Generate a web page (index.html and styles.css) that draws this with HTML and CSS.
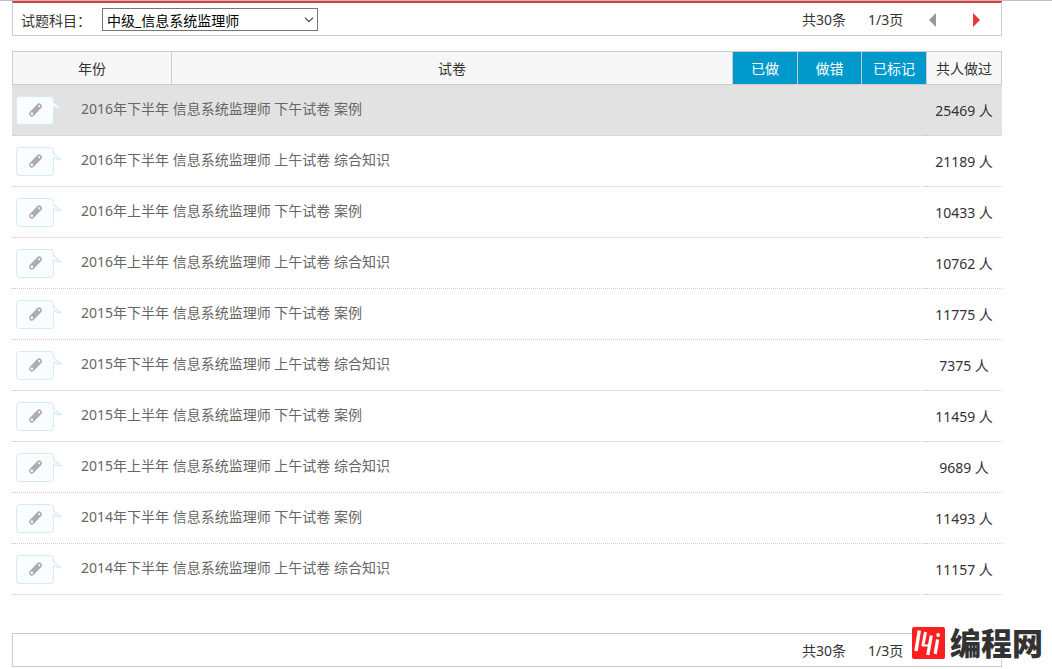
FILE: index.html
```html
<!DOCTYPE html>
<html lang="zh-CN">
<head>
<meta charset="utf-8">
<title>试题列表</title>
<link rel="stylesheet" href="styles.css">
</head>
<body>
<svg class="defs" aria-hidden="true">
  <symbol id="note" viewBox="0 0 46 30">
    <path d="M37.500 6.500L44.500 12.500H41L38 10.500" fill="#fafdff" stroke="#d8edf7" stroke-width="1.400"/>
    <rect x=".5" y=".5" width="37" height="28" rx="3" fill="#fafdff" stroke="#d5eaf5"/>
    <path d="M37.500 7.500v3" stroke="#fafdff" stroke-width="1.400"/>
    <g transform="translate(19.500 14) rotate(-46)">
      <rect x="-8" y="-2.800" width="16" height="5.600" rx="2.600" fill="#aaa"/>
      <circle cx="5.300" cy="0" r="1.200" fill="#f2f2f2"/>
      <circle cx="-5.300" cy="0" r="1.400" fill="#f8f8f8"/>
      <path d="M-3 -.9H3M-3 .9H3" stroke="#b8b8b8" stroke-width=".6"/>
    </g>
  </symbol>
</svg>
<main class="page">
  <div class="bar bar-top">
    <div class="subject">
      <label for="subject">试题科目<span class="colon">：</span></label>
      <span class="select-box">
        <select id="subject"><option>中级_信息系统监理师</option></select>
        <svg class="chevron" viewBox="0 0 10 6" aria-hidden="true"><path d="M1 .7l4 4 4-4" fill="none" stroke="#444" stroke-width="1.200"/></svg>
      </span>
    </div>
    <div class="pager">
      <span class="total">共30条</span>
      <span class="current">1/3页</span>
      <button class="turn prev" aria-label="上一页" disabled><svg viewBox="0 0 7 14"><path d="M7 0v14L0 7z"/></svg></button>
      <button class="turn next" aria-label="下一页"><svg viewBox="0 0 7 14"><path d="M0 0v14l7-7z"/></svg></button>
    </div>
  </div>

  <table class="papers">
    <colgroup><col class="c-year"><col><col class="c-tab"><col class="c-mid"><col class="c-tab"><col class="c-count"></colgroup>
    <thead>
      <tr><th>年份</th><th>试卷</th><th class="tab">已做</th><th class="tab">做错</th><th class="tab">已标记</th><th class="last">共人做过</th></tr>
    </thead>
    <tbody>
      <tr class="active"><td colspan="5"><a class="paper" href="#"><svg class="note"><use href="#note"/></svg><span>2016年下半年 信息系统监理师 下午试卷 案例</span></a></td><td class="count">25469 人</td></tr>
      <tr><td colspan="5"><a class="paper" href="#"><svg class="note"><use href="#note"/></svg><span>2016年下半年 信息系统监理师 上午试卷 综合知识</span></a></td><td class="count">21189 人</td></tr>
      <tr><td colspan="5"><a class="paper" href="#"><svg class="note"><use href="#note"/></svg><span>2016年上半年 信息系统监理师 下午试卷 案例</span></a></td><td class="count">10433 人</td></tr>
      <tr><td colspan="5"><a class="paper" href="#"><svg class="note"><use href="#note"/></svg><span>2016年上半年 信息系统监理师 上午试卷 综合知识</span></a></td><td class="count">10762 人</td></tr>
      <tr><td colspan="5"><a class="paper" href="#"><svg class="note"><use href="#note"/></svg><span>2015年下半年 信息系统监理师 下午试卷 案例</span></a></td><td class="count">11775 人</td></tr>
      <tr><td colspan="5"><a class="paper" href="#"><svg class="note"><use href="#note"/></svg><span>2015年下半年 信息系统监理师 上午试卷 综合知识</span></a></td><td class="count">7375 人</td></tr>
      <tr><td colspan="5"><a class="paper" href="#"><svg class="note"><use href="#note"/></svg><span>2015年上半年 信息系统监理师 下午试卷 案例</span></a></td><td class="count">11459 人</td></tr>
      <tr><td colspan="5"><a class="paper" href="#"><svg class="note"><use href="#note"/></svg><span>2015年上半年 信息系统监理师 上午试卷 综合知识</span></a></td><td class="count">9689 人</td></tr>
      <tr><td colspan="5"><a class="paper" href="#"><svg class="note"><use href="#note"/></svg><span>2014年下半年 信息系统监理师 下午试卷 案例</span></a></td><td class="count">11493 人</td></tr>
      <tr><td colspan="5"><a class="paper" href="#"><svg class="note"><use href="#note"/></svg><span>2014年下半年 信息系统监理师 上午试卷 综合知识</span></a></td><td class="count">11157 人</td></tr>
    </tbody>
  </table>

  <div class="footer">
    <div class="bar bar-bottom">
      <div class="pager">
        <span class="total">共30条</span>
        <span class="current">1/3页</span>
      </div>
    </div>
    <div class="brand">
      <svg class="brand-mark" viewBox="0 0 33 32" aria-hidden="true">
        <rect width="33" height="32" rx="2" fill="#fb1f20"/>
        <g fill="none" stroke="#fff">
          <path d="M7.300 3.500L4 24" stroke-width="3.400"/>
          <path d="M13.500 5L10.800 19" stroke-width="3"/>
          <path d="M10 18.500h8" stroke-width="2"/>
          <path d="M19.300 8.500L15.800 28" stroke-width="3.200"/>
          <path d="M25.600 12.500L23.200 27" stroke-width="3.200"/>
        </g>
        <circle cx="26.200" cy="8" r="1.900" fill="#fff"/>
      </svg>
      <span class="brand-name">编程网</span>
    </div>
  </div>
</main>
</body>
</html>
```

FILE: styles.css
```css
* { box-sizing: border-box; }

body {
  margin: 0;
  border-top: 1px solid #bfbfbf;
  background: #fff;
  color: #333;
  font: 14px/20px "Noto Sans", "Noto Sans CJK SC", sans-serif;
}

.defs { position: absolute; width: 0; height: 0; }

.page { padding: 0 50px 0 12px; }

.bar {
  display: flex;
  align-items: center;
  justify-content: space-between;
  border: 1px solid #ccc;
}

.bar-top {
  height: 35px;
  padding-left: 8px;
  border-top: 2px solid #e4393c;
}

.subject { display: flex; align-items: center; }
.subject label { width: 81px; padding-top: 2px; }
.colon { font-family: "Noto Sans CJK TC", sans-serif; }

.select-box { position: relative; display: flex; }

.select-box select {
  appearance: none;
  width: 216px;
  height: 23px;
  padding: 2px 24px 0 4px;
  border: 1px solid #767676;
  border-radius: 0;
  background: #fff;
  color: #000;
  font: inherit;
  line-height: 20px;
}

.chevron {
  position: absolute;
  top: 9px;
  right: 4px;
  width: 10px;
  height: 6px;
  pointer-events: none;
}

.pager { display: flex; align-items: center; padding: 2px 21px 0 0; }
.total { width: 66px; }
.current { width: 61px; }

.turn {
  display: flex;
  padding: 0;
  border: 0;
  background: none;
}

.turn svg { width: 7px; height: 14px; }
.prev { margin-right: 37px; fill: #999; }
.next { fill: #e4393c; }

.papers {
  width: 100%;
  margin-top: 15px;
  border-collapse: separate;
  border-spacing: 0;
  table-layout: fixed;
}

.c-year { width: 159px; }
.c-tab { width: 65px; }
.c-mid { width: 64px; }
.c-count { width: 76px; }

.papers th {
  height: 34px;
  padding: 2px 0 0;
  border: 1px solid #ccc;
  border-right: 0;
  background: #f7f7f7;
  font-weight: 400;
}

.papers .tab { background: #09c; color: #fff; }
.papers .last { border-right: 1px solid #ccc; }

.papers td {
  height: 51px;
  padding: 2px 0 0;
  border-bottom: 1px dotted #ccc;
}

.active td { background: #e2e2e2; }

.paper {
  display: flex;
  align-items: center;
  gap: 19px;
  padding-left: 4px;
  color: #666;
  text-decoration: none;
}

.paper span { padding-bottom: 4px; }
.note { width: 46px; height: 30px; }
.papers .count { text-align: center; }

.footer { position: relative; margin-top: 38px; }

.bar-bottom { height: 34px; justify-content: flex-end; }
.bar-bottom .pager { padding-right: 72px; }

.brand {
  position: absolute;
  top: -6px;
  right: -41px;
  display: flex;
  align-items: center;
  gap: 5px;
  height: 32px;
  background: #fff;
}

.brand-mark { width: 33px; height: 32px; }

.brand-name {
  color: #333;
  font: 900 31px/28px "Noto Sans CJK SC", sans-serif;
  padding-bottom: 2px;
}
```
